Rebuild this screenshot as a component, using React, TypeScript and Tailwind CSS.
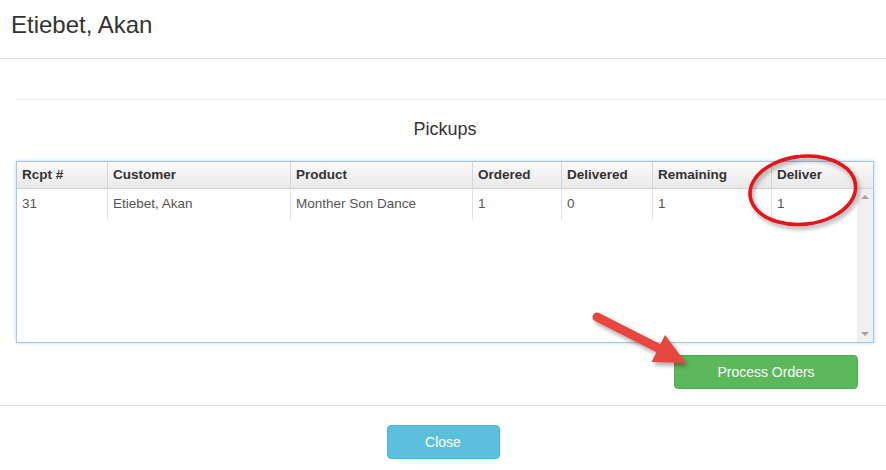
import React from "react";

const columns = [
  { label: "Rcpt #", w: "w-[91px]" },
  { label: "Customer", w: "w-[183px]" },
  { label: "Product", w: "w-[182px]" },
  { label: "Ordered", w: "w-[89px]" },
  { label: "Delivered", w: "w-[91px]" },
  { label: "Remaining", w: "w-[119px]" },
];

const row = ["31", "Etiebet, Akan", "Monther Son Dance", "1", "0", "1"];

const Annotations = () => (
  <svg
    className="absolute inset-0 pointer-events-none"
    width="886"
    height="470"
    viewBox="0 0 886 470"
  >
    <defs>
      <filter id="shadow" x="-20%" y="-20%" width="140%" height="140%">
        <feDropShadow dx="2" dy="3" stdDeviation="2" floodColor="#000" floodOpacity="0.35" />
      </filter>
    </defs>
    {/* circle round the Deliver column */}
    <path
      d="M801.2 156.3 A53 34 -6 1 1 798.2 156.6"
      fill="none"
      stroke="#e4141c"
      strokeWidth="3.6"
      strokeLinecap="round"
      filter="url(#shadow)"
    />
    {/* arrow to the button */}
    <g filter="url(#shadow)" fill="#e8473f">
      <line x1="597" y1="317" x2="660" y2="349" stroke="#e8473f" strokeWidth="9" strokeLinecap="round" />
      <polygon points="665,335 651.5,362 686,363" />
    </g>
  </svg>
);

const App = () => {
  return (
    <div className="relative w-[886px] h-[470px] overflow-hidden bg-white font-['Liberation_Sans',Arial,sans-serif] text-[#333]">
      {/* Header */}
      <div className="h-[59px] border-b border-[#e5e5e5] pl-[11px] pt-[12px]">
        <h4 className="text-[24px] leading-[1.1]">Etiebet, Akan</h4>
      </div>

      {/* Body */}
      <div className="pl-4 pr-3">
        <div className="mt-[40px] -mr-3 h-px bg-[#eee]"></div>
        <div className="mt-[19px] text-center text-[18px] leading-[20px] text-[#333]">Pickups</div>

        <div className="mt-[22px] h-[182px] w-[858px] border border-[#a8c8e6] shadow-[0_0_4px_rgba(110,160,215,0.45)] flex flex-col">
          {/* header row */}
          <div className="flex h-[27px] border-b border-[#d3d3d3] bg-gradient-to-b from-[#fbfbfb] to-[#e8e8e8] text-[13.5px] font-bold leading-[26px] text-[#333]">
            {columns.map((c) => (
              <div key={c.label} className={`${c.w} border-r border-[#d6d6d6] pl-[5px]`}>
                {c.label}
              </div>
            ))}
            <div className="flex-1 pl-[5px]">Deliver</div>
          </div>

          {/* body */}
          <div className="flex flex-1">
            <div className="flex-1">
              <div className="flex h-[31px] text-[13.5px] leading-[30px] text-[#555]">
                {row.map((v, i) => (
                  <div key={i} className={`${columns[i].w} border-r border-[#e2e2e2] pl-[5px] text-[#555]`}>
                    {v}
                  </div>
                ))}
                <div className="flex-1 pl-[5px] text-[#555]">1</div>
              </div>
            </div>
            {/* scrollbar */}
            <div className="w-4 bg-[#f0f0f0] flex flex-col items-center justify-between pt-[6px] pb-[6px]">
              <div className="w-0 h-0 border-l-[4px] border-r-[4px] border-b-[4px] border-l-transparent border-r-transparent border-b-[#a3a3a3]"></div>
              <div className="w-0 h-0 border-l-[4px] border-r-[4px] border-t-[4px] border-l-transparent border-r-transparent border-t-[#a3a3a3]"></div>
            </div>
          </div>
        </div>

        <div className="mt-[12px] flex justify-end pr-[16px]">
          <button className="h-[34px] w-[184px] rounded-[4px] border border-[#4cae4c] bg-[#5cb85c] text-[14px] text-white">
            Process Orders
          </button>
        </div>
      </div>

      {/* Footer */}
      <div className="mt-[16px] border-t border-[#e5e5e5] pt-[19px] flex justify-center">
        <button className="h-[34px] w-[113px] rounded-[4px] border border-[#46b8da] bg-[#5bc0de] text-[14px] text-white">
          Close
        </button>
      </div>

      <Annotations />
    </div>
  );
};

export default App;
